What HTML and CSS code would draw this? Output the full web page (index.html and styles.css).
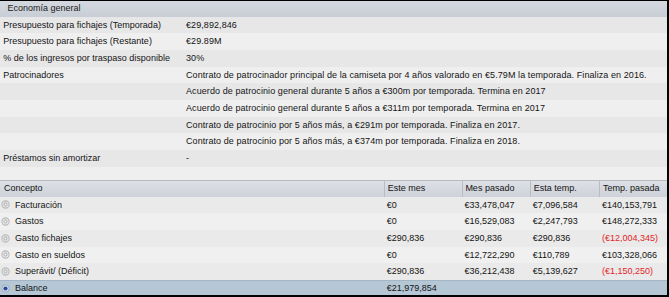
FILE: index.html
```html
<!DOCTYPE html>
<html lang="es">
<head>
<meta charset="utf-8">
<title>Economía general</title>
<link rel="stylesheet" href="styles.css">
</head>
<body>
<div class="frame">
  <div class="title">Economía general</div>
  <div class="info">
    <div class="row"><div class="lbl">Presupuesto para fichajes (Temporada)</div><div class="val">€29,892,846</div></div>
    <div class="row"><div class="lbl">Presupuesto para fichajes (Restante)</div><div class="val">€29.89M</div></div>
    <div class="row"><div class="lbl">% de los ingresos por traspaso disponible</div><div class="val">30%</div></div>
    <div class="row"><div class="lbl">Patrocinadores</div><div class="val">Contrato de patrocinador principal de la camiseta por 4 años valorado en €5.79M la temporada. Finaliza en 2016.</div></div>
    <div class="row"><div class="lbl"></div><div class="val">Acuerdo de patrocinio general durante 5 años a €300m por temporada. Termina en 2017</div></div>
    <div class="row"><div class="lbl"></div><div class="val">Acuerdo de patrocinio general durante 5 años a €311m por temporada. Termina en 2017</div></div>
    <div class="row"><div class="lbl"></div><div class="val">Contrato de patrocinio por 5 años más, a €291m por temporada. Finaliza en 2017.</div></div>
    <div class="row"><div class="lbl"></div><div class="val">Contrato de patrocinio por 5 años más, a €374m por temporada. Finaliza en 2018.</div></div>
    <div class="row"><div class="lbl">Préstamos sin amortizar</div><div class="val">-</div></div>
    <div class="spacer"></div>
  </div>
  <div class="fin">
    <div class="fhead">
      <div class="hc first">Concepto</div>
      <div class="hc">Este mes</div>
      <div class="hc">Mes pasado</div>
      <div class="hc">Esta temp.</div>
      <div class="hc">Temp. pasada</div>
    </div>
    <div class="frow">
      <div class="c first"><svg class="radio" viewBox="0 0 9 9"><circle cx="4.5" cy="4.5" r="3.6" class="ring"/><circle cx="4.5" cy="4.5" r="1.6" class="ring"/></svg>Facturación</div>
      <div class="c">€0</div><div class="c">€33,478,047</div><div class="c">€7,096,584</div><div class="c">€140,153,791</div>
    </div>
    <div class="frow">
      <div class="c first"><svg class="radio" viewBox="0 0 9 9"><circle cx="4.5" cy="4.5" r="3.6" class="ring"/><circle cx="4.5" cy="4.5" r="1.6" class="ring"/></svg>Gastos</div>
      <div class="c">€0</div><div class="c">€16,529,083</div><div class="c">€2,247,793</div><div class="c">€148,272,333</div>
    </div>
    <div class="frow">
      <div class="c first"><svg class="radio" viewBox="0 0 9 9"><circle cx="4.5" cy="4.5" r="3.6" class="ring"/><circle cx="4.5" cy="4.5" r="1.6" class="ring"/></svg>Gasto fichajes</div>
      <div class="c">€290,836</div><div class="c">€290,836</div><div class="c">€290,836</div><div class="c neg">(€12,004,345)</div>
    </div>
    <div class="frow">
      <div class="c first"><svg class="radio" viewBox="0 0 9 9"><circle cx="4.5" cy="4.5" r="3.6" class="ring"/><circle cx="4.5" cy="4.5" r="1.6" class="ring"/></svg>Gasto en sueldos</div>
      <div class="c">€0</div><div class="c">€12,722,290</div><div class="c">€110,789</div><div class="c">€103,328,066</div>
    </div>
    <div class="frow">
      <div class="c first"><svg class="radio" viewBox="0 0 9 9"><circle cx="4.5" cy="4.5" r="3.6" class="ring"/><circle cx="4.5" cy="4.5" r="1.6" class="ring"/></svg>Superávit/ (Déficit)</div>
      <div class="c">€290,836</div><div class="c">€36,212,438</div><div class="c">€5,139,627</div><div class="c neg">(€1,150,250)</div>
    </div>
    <div class="frow sel">
      <div class="c first"><svg class="radio" viewBox="0 0 9 9"><circle cx="4.5" cy="4.5" r="3.7" class="sring"/><circle cx="4.5" cy="4.5" r="2.1" class="dot"/></svg>Balance</div>
      <div class="c">€21,979,854</div><div class="c"></div><div class="c"></div><div class="c"></div>
    </div>
  </div>
</div>
</body>
</html>
```

FILE: styles.css
```css
* { box-sizing: border-box; }
html, body { margin: 0; padding: 0; background: #000; }
body {
  width: 669px;
  height: 297px;
  overflow: hidden;
  font-family: "Liberation Sans", Arial, sans-serif;
  font-size: 9px;
  color: #141414;
}
.frame {
  width: 669px;
  height: 297px;
  border-top: 1px solid #000;
  border-right: 2px solid #000;
  border-bottom: 2px solid #000;
  background: #ececec;
  overflow: hidden;
}
.title {
  height: 15.667px;
  line-height: 15.667px;
  padding-left: 7.5px;
  background: linear-gradient(#d4d8df, #c9ced6);
  color: #1a1a1a;
}
.row {
  display: flex;
  height: 16.667px;
  line-height: 16.667px;
  white-space: nowrap;
}
.info .row:nth-child(odd) { background: #e7e7e8; }
.info .row:nth-child(even) { background: #efefef; }
.lbl { width: 186px; padding-left: 3.3px; flex: none; }
.val { flex: 1; letter-spacing: 0.08px; }
.spacer { height: 13.333px; background: #efefef; }
.fin { display: flex; flex-direction: column; }
.fhead, .frow {
  display: grid;
  grid-template-columns: 384px 77.7px 68.3px 69.3px 1fr;
  white-space: nowrap;
}
.fhead {
  height: 16.667px;
  line-height: 15.667px;
  border-top: 1px solid #b5b9c0;
  background: linear-gradient(#dde0e5, #ced2d9);
}
.hc { padding-left: 2.7px; border-left: 1px solid #b8bcc3; }
.hc.first { border-left: none; padding-left: 4px; }
.frow { height: 16.667px; line-height: 16.667px; }
.frow:nth-child(even) { background: #eaeaea; }
.frow:nth-child(odd) { background: #f0f0f0; }
.c { padding-left: 2.7px; }
.c.first { display: flex; align-items: center; padding-left: 0.8px; }
.radio { width: 9px; height: 9px; margin-right: 5.2px; flex: none; }
.ring { fill: none; stroke: #b9b9b9; stroke-width: 1.1; }
.sring { fill: #d3dde7; stroke: #97a9b9; stroke-width: 0.9; }
.dot { fill: #2a4c9c; }
.neg { color: #e31e28; }
.frow.sel { background: #b5c7d5; border-top: 1px solid #a3b6c5; line-height: 15.667px; }
```
